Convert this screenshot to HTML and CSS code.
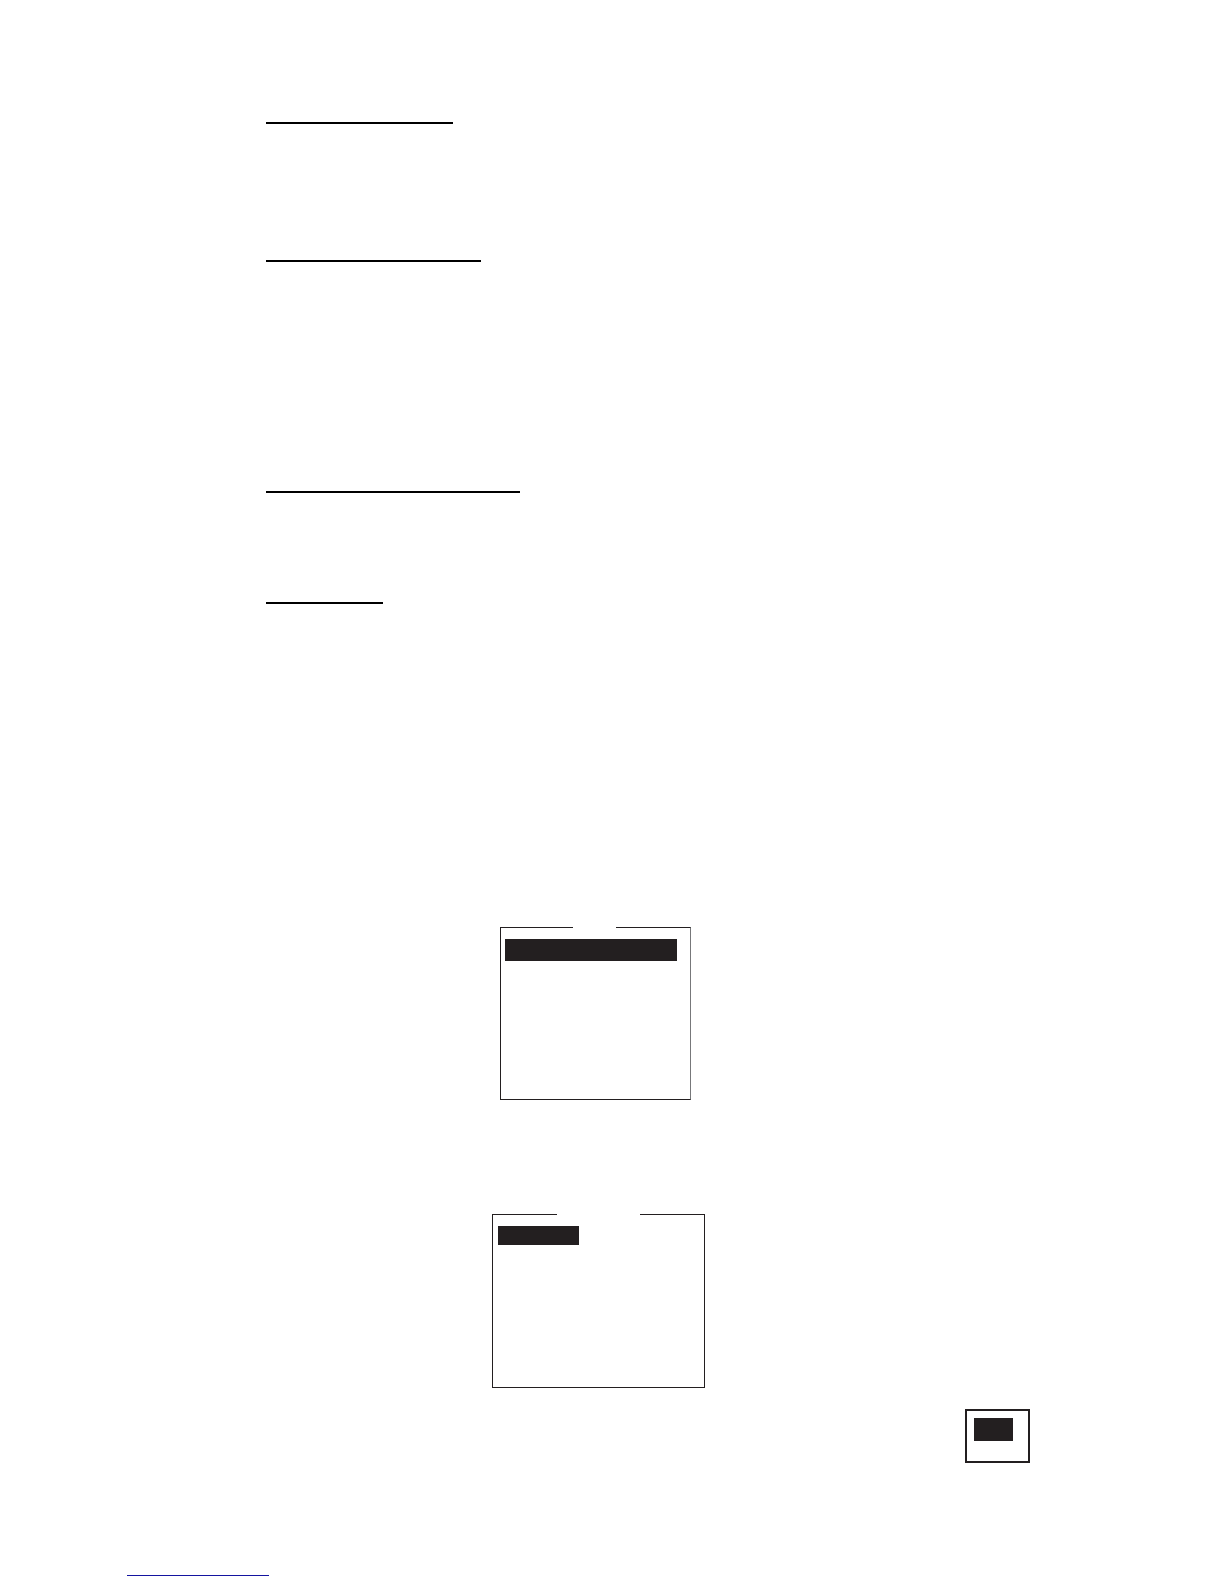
FILE: index.html
```html
<!DOCTYPE html>
<html lang="en">
<head>
    <meta charset="utf-8">
    <link rel="stylesheet" href="styles.css">
</head>
    <body>
        <main class="content">
            <section class="section section-short">
                <div class="rule rule-first"></div>
            </section>
            <section class="section section-long">
                <div class="rule rule-second"></div>
            </section>
            <section class="section section-brief">
                <div class="rule rule-third"></div>
            </section>
            <section class="section section-last">
                <div class="rule rule-fourth"></div>
            </section>

            <fieldset class="menu menu-main">
                <legend></legend>
                <div class="selected"></div>
            </fieldset>

            <fieldset class="menu menu-sub">
                <legend></legend>
                <div class="selected"></div>
            </fieldset>

            <div class="options">
                <div class="selected"></div>
            </div>
        </main>

        <footer class="footer">
            <a class="footer-link" href="#"></a>
        </footer>
    </body>
</html>
```

FILE: styles.css
```css
* {
    box-sizing: border-box;
}
body {
    margin: 0;
    background-color: #fff;
    font-family: "Liberation Sans", Arial, sans-serif;
}
.content {
    display: flex;
    flex-direction: column;
    align-items: flex-start;
    padding: 122px 194px 0 266px;
}

/* section underlines */
.section {
    width: 100%;
}
.section-short {
    min-height: 138px;
}
.section-long {
    min-height: 231px;
}
.section-brief {
    min-height: 111px;
}
.section-last {
    min-height: 325px;
}
.rule {
    height: 2px;
    background-color: #000;
}
.rule-first {
    width: 187px;
}
.rule-second {
    width: 215px;
}
.rule-third {
    width: 254px;
}
.rule-fourth {
    width: 117px;
}

/* menu windows, the legend leaves the gap in the top border */
.menu {
    margin: 0;
    border: 1px solid #231f20;
}
.menu legend {
    height: 1px;
    margin: 0 auto;
    padding: 0;
}
.selected {
    background-color: #231f20;
}
.menu-main {
    width: 191px;
    min-height: 173px;
    margin-left: 234px;
    padding: 11px 4px 0 4px;
    border-right-color: #77787a;
}
.menu-main legend {
    width: 43px;
    margin-left: 68px;
}
.menu-main .selected {
    width: 172px;
    height: 22px;
}
.menu-sub {
    width: 213px;
    min-height: 174px;
    margin-top: 114px;
    margin-left: 226px;
    padding: 11px 5px 0 5px;
}
.menu-sub legend {
    width: 83px;
}
.menu-sub .selected {
    width: 81px;
    height: 19px;
}
.options {
    align-self: flex-end;
    width: 65px;
    min-height: 54px;
    margin-top: 21px;
    padding: 7px;
    border: 2px solid #231f20;
}
.options .selected {
    width: 39px;
    height: 23px;
}

.footer {
    padding: 112px 127px 8px;
}
.footer-link {
    display: block;
    width: 142px;
    height: 1px;
    background-color: #1414a0;
}
```
